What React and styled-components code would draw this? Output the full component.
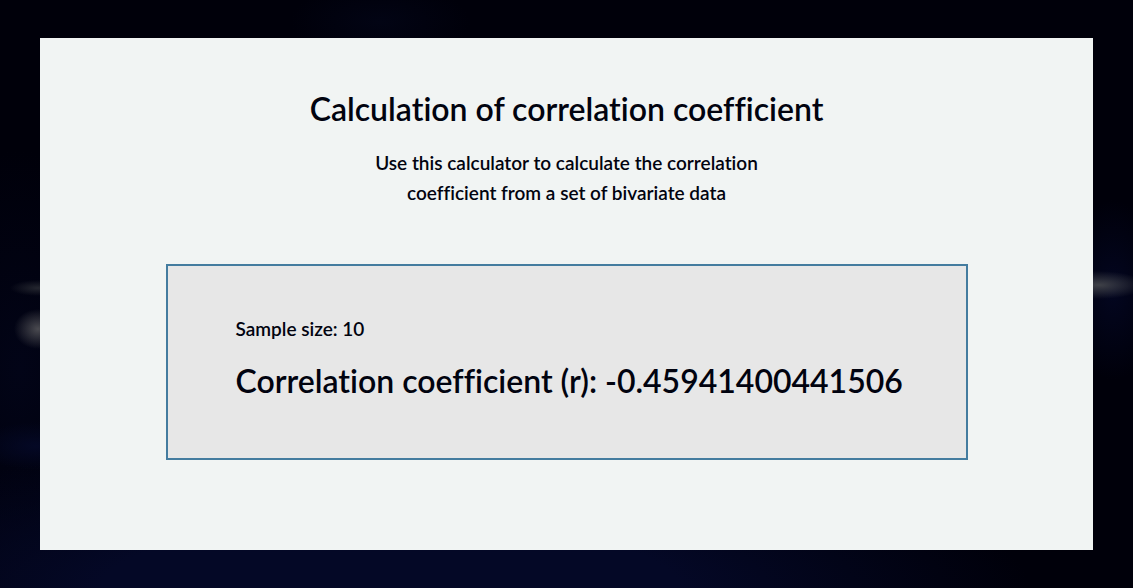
import React from "react";
import styled, { createGlobalStyle } from "styled-components";

const Global = createGlobalStyle`
  * { box-sizing: border-box; }
  body { margin: 0; background: #00000a; }
`;

const Page = styled.div`
  min-height: 100vh;
  display: flex;
  padding: 38px 40px;
  color: #01030f;
  font-family: Lato, "Liberation Sans", sans-serif;
  font-weight: 600;
  font-variant-ligatures: none;
  background:
    radial-gradient(ellipse 24px 20px at 38px 329px, #4a4a50, transparent),
    radial-gradient(ellipse 28px 8px at 38px 288px, #24262f, transparent),
    radial-gradient(ellipse 46px 14px at calc(100% - 34px) 285px, #3f4148, transparent),
    radial-gradient(ellipse 60px 24px at 36px 446px, #040825, transparent),
    radial-gradient(ellipse 50px 90px at calc(100% - 20px) 290px, #030620, transparent),
    radial-gradient(ellipse 90px 40px at 380px 22px, #020414, transparent),
    radial-gradient(ellipse 640px 150px at 390px 100%, #040826 0%, #040826 45%, transparent 100%),
    radial-gradient(ellipse 120px 220px at 20px 370px, #020417, transparent),
    #00000a;
`;

const Panel = styled.main`
  flex: 1;
  padding: 48px 40px 88px;
  background: #f1f4f3;
`;

const Header = styled.header`
  text-align: center;
`;

const Title = styled.h1`
  margin: 0;
  font-size: 32px;
  line-height: 46px;
  font-weight: 600;
`;

const Intro = styled.p`
  max-width: 420px;
  margin: 16px auto 0;
  font-size: 19px;
  line-height: 30px;
`;

const ResultBox = styled.section`
  max-width: 802px;
  margin: 56px auto 0;
  padding: 48px 48px 54px 68px;
  border: 2px solid #447c9f;
  background: #e7e7e7;
`;

const SampleSize = styled.p`
  margin: 0;
  font-size: 19px;
  line-height: 30px;
`;

const Coefficient = styled.p`
  margin: 14px 0 0;
  font-size: 32px;
  line-height: 46px;
`;

export default function App() {
  return (
    <>
      <Global />
      <Page>
        <Panel>
          <Header>
            <Title>Calculation of correlation coefficient</Title>
            <Intro>Use this calculator to calculate the correlation coefficient from a set of bivariate data</Intro>
          </Header>
          <ResultBox>
            <SampleSize>Sample size: 10</SampleSize>
            <Coefficient>Correlation coefficient (r): -0.45941400441506</Coefficient>
          </ResultBox>
        </Panel>
      </Page>
    </>
  );
}
